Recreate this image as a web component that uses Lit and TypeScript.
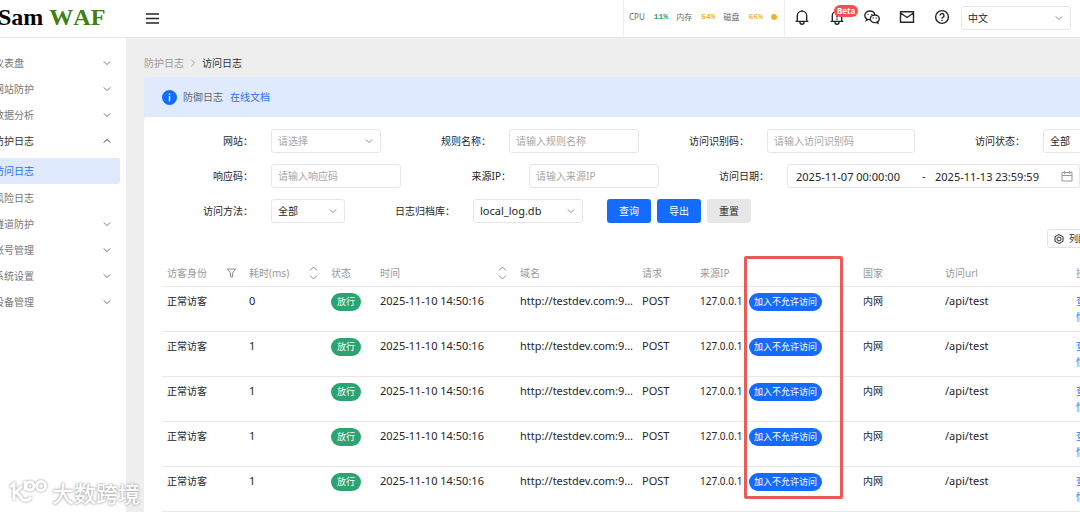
import { LitElement, html, css, svg } from "lit";
import { customElement } from "lit/decorators.js";
import { classMap } from "lit/directives/class-map.js";

const chevron = (d: string) => html`<svg class="chev" viewBox="0 0 8 8" aria-hidden="true"><path d=${d} /></svg>`;
const down = () => chevron("M.8 2.4 4 5.6 7.2 2.4");
const up = () => chevron("M.8 5.6 4 2.4 7.2 5.6");

const bell = svg`<path d="M3.300 12.200V6.800a4.700 4.700 0 0 1 9.400 0v5.400M1.600 12.400h12.800M8 2.200V1M6 12.600v.6a2 2 0 0 0 4 0v-.6" />`;

const icons = [
  { label: "通知", shape: bell, badge: "" },
  { label: "告警", shape: svg`${bell}<path d="M8 5v3.6M8 9.6v1.2" />`, badge: "Beta" },
  {
    label: "微信",
    shape: svg`<path d="M10.9 6C10.500 3.600 8.500 2 6 2 3.100 2 .8 3.900.8 6.400c0 1.400.7 2.600 1.900 3.400l-.4 1.600 1.900-1c.5.200 1.100.300 1.700.300" /><path d="M10.800 6c-2.500 0-4.500 1.700-4.500 3.800s2 3.800 4.500 3.800c.6 0 1.100-.1 1.600-.3l1.500.8-.4-1.300c1.100-.7 1.800-1.700 1.800-3 0-2.100-2-3.800-4.500-3.800z" /><path d="M4.200 5.200v.8M7.600 5.200v.8M9.300 8.600v.8M12.300 8.600v.8" />`,
    badge: "",
  },
  { label: "邮件", shape: svg`<path d="M1.500 2.800h13v10.500h-13zM1.500 4l6.500 4.500L14.500 4" />`, badge: "" },
  { label: "帮助", shape: svg`<circle cx="8" cy="8" r="6.400" /><path d="M6 6.600a2 2 0 1 1 2.800 1.800c-.6.300-.8.600-.8 1.300M8 10.800v1.300" />`, badge: "" },
];

const menu = [
  { name: "仪表盘" },
  { name: "网站防护" },
  { name: "数据分析" },
  { name: "防护日志", children: ["访问日志", "风险日志"] },
  { name: "隧道防护" },
  { name: "账号管理" },
  { name: "系统设置" },
  { name: "设备管理" },
];

const stats = [
  { name: "CPU", value: "11%", ok: true },
  { name: "内存", value: "54%", ok: false },
  { name: "磁盘", value: "66%", ok: false },
];

const rows = ["0", "1", "1", "1", "1"];

@customElement("app-root")
export class AppRoot extends LitElement {
  static styles = css`
    :host {
      display: flex;
      flex-direction: column;
      height: 100vh;
      overflow: hidden;
      position: relative;
      background: #fff;
      color: #262626;
      font: 10px/16px "Noto Sans", "Noto Sans CJK SC", sans-serif;
    }
    * { box-sizing: border-box; }
    button, input, select { font: inherit; color: inherit; margin: 0; }
    button { padding: 0; border: 0; background: none; }
    a { color: #2670f5; text-decoration: none; }
    svg { fill: none; stroke: currentColor; display: block; flex: none; }
    .chev { width: 8px; height: 8px; }

    .top {
      display: flex;
      align-items: center;
      height: 38px;
      flex: none;
      padding-right: 9px;
      border-bottom: 1px solid #e8e8e8;
    }
    .logo {
      display: flex;
      gap: 6px;
      width: 148px;
      margin-left: -2px;
      padding-bottom: 4px;
      flex: none;
      font: bold 24px/28px "Liberation Serif", serif;
      font-kerning: none;
      color: #050505;
    }
    .logo b { color: #3d8011; }
    .burger svg { width: 13px; height: 13px; stroke-width: 2; }
    .stats {
      display: flex;
      align-items: center;
      gap: 8px;
      height: 37px;
      width: 162px;
      margin-left: auto;
      margin-right: 9px;
      padding: 0 5px 4px;
      border: 1px solid #f0f0f0;
      border-width: 0 1px;
      font-size: 8px;
      line-height: 12px;
      color: #666;
      white-space: nowrap;
    }
    .stat { display: flex; gap: 9px; align-items: center; }
    .stat b { font-family: "Liberation Mono", monospace; color: #f0b429; }
    .stat .ok { color: #2ba471; }
    .dot { flex: none; width: 6px; height: 6px; border-radius: 50%; background: #eab529; }
    .icons { display: flex; gap: 19px; margin-right: 11px; padding-bottom: 4px; }
    .icons button { position: relative; }
    .icons svg { width: 16px; height: 16px; stroke-width: 1.4; }
    .badge {
      position: absolute;
      left: 5px;
      top: -4px;
      padding: 0 3px;
      border-radius: 6px;
      background: #f5504e;
      color: #fff;
      font: bold 8px/12px "Noto Sans", sans-serif;
    }

    .select { display: grid; align-items: center; height: 24px; }
    .select > * { grid-area: 1 / 1; }
    .select .chev { justify-self: end; margin-right: 8px; color: #888; pointer-events: none; }
    select, input, .range {
      height: 24px;
      width: 100%;
      padding: 0 6px;
      border: 1px solid #e6e6e6;
      border-radius: 3px;
      background: #fff;
      appearance: none;
      outline: 0;
    }
    .hint, input::placeholder { color: #a6a6a6; opacity: 1; }
    .latin { font-size: 11px; }
    .w74 { width: 74px; }
    .w110 { width: 110px; }
    .w130 { width: 130px; }
    .w148 { width: 148px; }
    .top .select { margin-bottom: 2px; }

    .body { display: flex; flex: 1; min-height: 0; }
    .side {
      flex: none;
      width: 132px;
      margin-left: -6px;
      padding: 12px 6px 0 0;
      color: #777;
    }
    .item {
      display: flex;
      align-items: center;
      justify-content: space-between;
      width: 100%;
      height: 26px;
      padding-right: 9px;
      border-radius: 2px;
    }
    .side a { color: inherit; }
    .side .open { color: #333; }
    .sub { display: grid; gap: 1px; padding-top: 4px; }
    .sub .active { background: #dfeafe; color: #2670f5; }

    .main { flex: 1; min-width: 0; overflow: hidden; background: #eee; padding: 17px 0 0 18px; }
    .crumbs { display: flex; align-items: center; gap: 5px; color: #999; margin-bottom: 6px; }
    .crumbs strong { font-weight: 400; color: #333; }
    .panel { min-width: 989px; }
    .alert {
      display: flex;
      align-items: center;
      gap: 6px;
      height: 42px;
      padding: 0 18px 2px;
      border-radius: 4px;
      background: #dfeafe;
      color: #666;
    }
    .alert svg { width: 15px; height: 15px; }
    .alert a { margin-left: 1px; }
    .card {
      margin-top: -2px;
      min-height: 440px;
      background: #fff;
      border-radius: 4px 4px 0 0;
      padding: 12px 18px 0;
    }
    form { display: grid; gap: 11px; margin-left: -19px; }
    .line { display: flex; }
    .field { display: flex; align-items: center; gap: 18px; }
    .field > label { width: 110px; text-align: right; }
    .field > * { flex: none; }
    .range { display: flex; align-items: center; width: 293px; padding: 0 6px 0 8px; }
    .range input { border: 0; padding: 0; height: 20px; width: 118px; background: none; font-size: 11px; }
    .range span { width: 21px; padding-left: 8px; font-size: 11px; }
    .range svg { width: 12px; height: 12px; color: #999; margin-left: auto; }
    .btns { display: flex; gap: 6px; margin-left: 24px; }
    .btns button { width: 44px; height: 24px; border-radius: 3px; background: #136bff; color: #fff; }
    .btns .plain { background: #e7e7e7; color: #333; }

    .tools { display: flex; justify-content: flex-end; margin: 6px 0 12px; }
    .tools button {
      display: flex;
      align-items: center;
      gap: 5px;
      width: 68px;
      height: 19px;
      padding: 0 6px;
      border: 1px solid #e3e3e3;
      border-radius: 3px;
      font-size: 9px;
    }
    .tools svg { width: 10px; height: 10px; }

    .grid { position: relative; }
    table { width: 100%; table-layout: fixed; border-collapse: separate; border-spacing: 0; text-align: left; }
    th { height: 27px; padding: 0 5px; font-weight: 400; color: #999; border-bottom: 1px solid #e7e7e7; }
    td { height: 45px; padding: 6px 5px; vertical-align: top; border-bottom: 1px solid #e7e7e7; white-space: nowrap; }
    td.cut { overflow: hidden; text-overflow: ellipsis; padding-right: 2px; }
    td.ip { padding-right: 0; }
    td.act { white-space: normal; }
    .head { display: flex; align-items: center; justify-content: space-between; padding-right: 3px; }
    .head svg { width: 9px; height: 14px; color: #8c8c8c; }
    .tag, td button {
      display: block;
      width: max-content;
      height: 18px;
      border-radius: 9px;
      font-size: 9px;
      line-height: 18px;
      color: #fff;
    }
    .tag { padding: 0 6px; background: #2ba471; }
    td button { padding: 0 5px; background: #136bff; }
    .mark {
      position: absolute;
      left: 582px;
      top: -4px;
      width: 99px;
      height: 243px;
      border: 3px solid #e95b57;
      border-radius: 2px;
      pointer-events: none;
    }
    .c82 { width: 82px; } .c49 { width: 49px; } .c140 { width: 140px; } .c122 { width: 122px; }
    .c58 { width: 58px; } .c114 { width: 114px; } .c131 { width: 131px; }

    .brand {
      position: absolute;
      left: 8px;
      bottom: 6px;
      display: flex;
      align-items: center;
      gap: 4px;
      color: #fff;
      font: 500 22px/28px "Noto Sans CJK SC", sans-serif;
      text-shadow: 0 0 2px #999, 0 0 3px #bbb;
      pointer-events: none;
    }
    .brand svg { width: 40px; height: 28px; filter: drop-shadow(0 0 1px #888); stroke-width: 3; }
  `;

  private select(id: string, value: string, width: string, extra = "") {
    return html`<div class="select ${width}">
      <select id=${id} class=${extra} aria-label=${value}><option>${value}</option></select>${down()}
    </div>`;
  }

  private text(id: string, hint: string, width: string) {
    return html`<input id=${id} class=${width} placeholder=${hint} />`;
  }

  private field(id: string, label: string, control: unknown) {
    return html`<div class="field"><label for=${id}>${label}：</label>${control}</div>`;
  }

  private sorter(name: string) {
    return html`<div class="head">${name}<svg viewBox="0 0 9 14"><path d="M1 4.500 4.500 1 8 4.500M1 9.500 4.500 13 8 9.500" /></svg></div>`;
  }

  render() {
    return html`
      <header class="top">
        <div class="logo"><span>Sam</span><b>WAF</b></div>
        <button class="burger" aria-label="菜单"><svg viewBox="0 0 13 13"><path d="M0 2h13M0 6.500h13M0 11h13" stroke-width="1.500" /></svg></button>
        <div class="stats">
          ${stats.map((s) => html`<span class="stat">${s.name}<b class=${classMap({ ok: s.ok })}>${s.value}</b></span>`)}
          <i class="dot"></i>
        </div>
        <div class="icons">
          ${icons.map((i) => html`<button aria-label=${i.label}><svg viewBox="0 0 16 16">${i.shape}</svg>${i.badge ? html`<span class="badge">${i.badge}</span>` : ""}</button>`)}
        </div>
        ${this.select("lang", "中文", "w110")}
      </header>
      <div class="body">
        <nav class="side">
          ${menu.map((m) => html`
            <button class=${classMap({ item: true, open: !!m.children })}>${m.name}${m.children ? up() : down()}</button>
            ${m.children ? html`<div class="sub">${m.children.map((c, i) => html`<a href="#" class=${classMap({ item: true, active: i === 0 })}>${c}</a>`)}</div>` : ""}
          `)}
        </nav>
        <main class="main">
          <div class="crumbs"><span>防护日志</span><svg class="chev" viewBox="0 0 8 8"><path d="M2.400.8 5.600 4 2.400 7.200" /></svg><strong>访问日志</strong></div>
          <div class="panel">
            <div class="alert">
              <svg viewBox="0 0 15 15"><circle cx="7.500" cy="7.500" r="7.500" fill="#136bff" stroke="none" /><path d="M7.500 3.500v1.400M7.500 6v5.500" stroke="#fff" stroke-width="1.300" /></svg>
              <span>防御日志</span><a href="#">在线文档</a>
            </div>
            <section class="card">
              <form>
                <div class="line">
                  ${this.field("site", "网站", this.select("site", "请选择", "w110", "hint"))}
                  ${this.field("rule", "规则名称", this.text("rule", "请输入规则名称", "w130"))}
                  ${this.field("code", "访问识别码", this.text("code", "请输入访问识别码", "w148"))}
                  ${this.field("state", "访问状态", this.select("state", "全部", "w74"))}
                </div>
                <div class="line">
                  ${this.field("resp", "响应码", this.text("resp", "请输入响应码", "w130"))}
                  ${this.field("ip", "来源IP", this.text("ip", "请输入来源IP", "w130"))}
                  ${this.field("from", "访问日期", html`<div class="range">
                    <input id="from" value="2025-11-07 00:00:00" /><span>-</span>
                    <input aria-label="结束日期" value="2025-11-13 23:59:59" />
                    <svg viewBox="0 0 12 12"><path d="M1 2.500h10v8.500H1zM1 5.500h10M3.500 1v3M8.500 1v3" /></svg>
                  </div>`)}
                </div>
                <div class="line">
                  ${this.field("method", "访问方法", this.select("method", "全部", "w74"))}
                  ${this.field("db", "日志归档库", this.select("db", "local_log.db", "w110", "latin"))}
                  <div class="btns"><button type="button">查询</button><button type="button">导出</button><button type="button" class="plain">重置</button></div>
                </div>
              </form>
              <div class="tools">
                <button><svg viewBox="0 0 10 10"><path d="M5 .5 9 2.700v4.600L5 9.500 1 7.300V2.700z" /><circle cx="5" cy="5" r="2" /></svg>列配置</button>
              </div>
              <div class="grid">
                <table>
                  <thead>
                    <tr>
                      <th class="c82"><div class="head">访客身份<svg viewBox="0 0 9 14"><path d="M.5 3h8L5.600 7v4H3.400V7z" /></svg></div></th>
                      <th class="c82">${this.sorter("耗时(ms)")}</th>
                      <th class="c49">状态</th>
                      <th class="c140">${this.sorter("时间")}</th>
                      <th class="c122">域名</th>
                      <th class="c58">请求</th>
                      <th class="c49">来源IP</th>
                      <th class="c114"></th>
                      <th class="c82">国家</th>
                      <th class="c131">访问url</th>
                      <th>操作</th>
                    </tr>
                  </thead>
                  <tbody>
                    ${rows.map((ms) => html`<tr>
                      <td>正常访客</td>
                      <td class="latin">${ms}</td>
                      <td><span class="tag">放行</span></td>
                      <td class="latin">2025-11-10 14:50:16</td>
                      <td class="latin cut">http://testdev.com:9090/api</td>
                      <td class="latin">POST</td>
                      <td class="ip">127.0.0.1</td>
                      <td><button>加入不允许访问</button></td>
                      <td>内网</td>
                      <td class="latin">/api/test</td>
                      <td class="act"><a href="#">查看详情</a></td>
                    </tr>`)}
                  </tbody>
                </table>
                <div class="mark"></div>
              </div>
            </section>
          </div>
        </main>
      </div>
      <div class="brand">
        <svg viewBox="0 0 40 28"><path d="M2 9 6 6v16M14 8 8 14l5 5c1 4 7 5 10 0" /><circle cx="22" cy="8" r="4" /><circle cx="33" cy="8" r="4.500" /><path d="M17 12V3" /></svg>
        <span>大数跨境</span>
      </div>
    `;
  }
}
